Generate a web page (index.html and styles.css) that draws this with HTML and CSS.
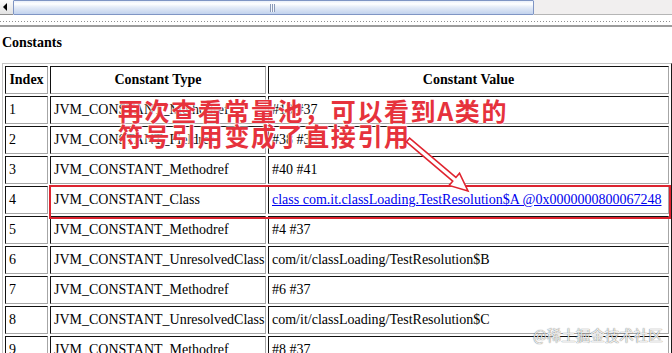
FILE: index.html
```html
<!DOCTYPE html>
<html lang="zh">
<head>
<meta charset="utf-8">
<title>Constants</title>
<link rel="stylesheet" href="styles.css">
</head>
<body>
<div class="page">
  <div class="hscroll">
    <div class="btn-left"><span class="tri"></span></div>
    <div class="thumb"><span class="grip"></span></div>
    <div class="track"></div>
  </div>
  <div class="sep"></div>
  <h3 class="title">Constants</h3>
  <table class="pool">
    <tr><th class="c-idx">Index</th><th class="c-type">Constant Type</th><th class="c-val">Constant Value</th></tr>
    <tr><td>1</td><td>JVM_CONSTANT_Methodref</td><td>#13 #37</td></tr>
    <tr><td>2</td><td>JVM_CONSTANT_Fieldref</td><td>#38 #39</td></tr>
    <tr><td>3</td><td>JVM_CONSTANT_Methodref</td><td>#40 #41</td></tr>
    <tr><td>4</td><td>JVM_CONSTANT_Class</td><td><a href="#">class com.it.classLoading.TestResolution$A @0x0000000800067248</a></td></tr>
    <tr><td>5</td><td>JVM_CONSTANT_Methodref</td><td>#4 #37</td></tr>
    <tr><td>6</td><td>JVM_CONSTANT_UnresolvedClass</td><td>com/it/classLoading/TestResolution$B</td></tr>
    <tr><td>7</td><td>JVM_CONSTANT_Methodref</td><td>#6 #37</td></tr>
    <tr><td>8</td><td>JVM_CONSTANT_UnresolvedClass</td><td>com/it/classLoading/TestResolution$C</td></tr>
    <tr><td>9</td><td>JVM_CONSTANT_Methodref</td><td>#8 #37</td></tr>
  </table>

  <div class="note">再次查看常量池，可以看到A类的<br>符号引用变成了直接引用</div>
  <div class="redbox"></div>
  <svg class="arrow" width="672" height="353" viewBox="0 0 672 353">
    <polygon points="406.4,141.9 452.7,181.2 449.1,185.4 468,191 459.5,173.2 455.9,177.4 409.6,138.1" fill="#fff" stroke="#e0242f" stroke-width="1.6" stroke-linejoin="miter"/>
  </svg>
  <div class="watermark">@稀土掘金技术社区</div>
</div>
</body>
</html>
```

FILE: styles.css
```css
html, body {
  margin: 0;
  padding: 0;
  background: #fff;
}

.page {
  position: relative;
  width: 672px;
  height: 353px;
  overflow: hidden;
  font-family: "Liberation Serif", "Times New Roman", serif;
  color: #000;
}

/* horizontal scrollbar */
.hscroll {
  display: flex;
  height: 15px;
}

.btn-left {
  width: 13px;
  box-sizing: border-box;
  background: linear-gradient(#fbfbfb, #e2e2e2);
  border-bottom: 1px solid #8d8d8d;
  display: flex;
  align-items: center;
  padding-left: 3px;
}

.tri {
  width: 0;
  height: 0;
  border-top: 4px solid transparent;
  border-bottom: 4px solid transparent;
  border-right: 4px solid #000;
}

.thumb {
  width: 521px;
  box-sizing: border-box;
  border: 1px solid #7f95c4;
  border-radius: 1px;
  background: linear-gradient(#e9eff9 0%, #ffffff 22%, #e6edf8 45%, #d2def2 75%, #c3d3ee 100%);
  display: flex;
  justify-content: center;
  align-items: center;
}

.grip {
  width: 5px;
  height: 8px;
  margin-left: -2px;
  background: repeating-linear-gradient(90deg, #8a9ab8 0 1px, #f6f8fc 1px 2px);
}

.track {
  flex: 1;
  box-sizing: border-box;
  background: #f1efef;
  border-bottom: 1px solid #b5b5b5;
}

/* splitter */
.sep {
  margin-top: 6px;
  height: 6px;
  background:
    repeating-linear-gradient(90deg, #8f8f8f 0 1px, transparent 1px 3px) top / 100% 1px no-repeat,
    linear-gradient(#9c9c9c, #9c9c9c) bottom / 100% 2px no-repeat;
}

.title {
  margin: 8px 0 0;
  padding-left: 2px;
  font-size: 14px;
  line-height: 16px;
  font-weight: bold;
  height: 16px;
}

/* constants table */
.pool {
  margin: 12px 0 0 2px;
  width: 670px;
  table-layout: fixed;
  border-collapse: separate;
  border-spacing: 2px;
  border: 1px solid;
  border-color: #c4c4c4 #1a1a1a #1a1a1a #c4c4c4;
  font-size: 14px;
}

.pool th,
.pool td {
  box-sizing: border-box;
  border: 1px solid;
  border-color: #111 #a6a6a6 #a6a6a6 #111;
  padding: 5px 3px;
  line-height: 16px;
  height: 28px;
  white-space: nowrap;
  text-align: left;
  font-weight: normal;
}

.pool th {
  font-weight: bold;
  text-align: center;
}

.pool th.c-idx { width: 43px; }
.pool th.c-type { width: 216px; }
.pool th.c-val { width: 401px; }

.pool a {
  color: #0000ee;
  text-decoration: underline;
}

/* annotation overlay */
.note {
  position: absolute;
  left: 118px;
  top: 98px;
  font-family: "Noto Sans CJK SC", "Noto Sans", sans-serif;
  font-weight: 700;
  font-size: 25px;
  line-height: 25px;
  letter-spacing: 1.6px;
  color: #e6323c;
  text-shadow: 0 0 2px #fff, 0 0 2px #fff, 0 0 1px #fff;
  white-space: nowrap;
}

.redbox {
  position: absolute;
  left: 49px;
  top: 185px;
  width: 622px;
  height: 34px;
  box-sizing: border-box;
  border: 2px solid #dc2430;
}

.arrow {
  position: absolute;
  left: 0;
  top: 0;
}

.watermark {
  position: absolute;
  left: 533px;
  top: 325px;
  font-family: "Noto Sans CJK SC", "Noto Sans", sans-serif;
  font-size: 14.5px;
  line-height: 20px;
  color: rgba(255, 255, 255, 0.9);
  text-shadow: 0 0 1px rgba(0, 0, 0, 0.55), 0 0 1px rgba(0, 0, 0, 0.3);
  white-space: nowrap;
}
```
